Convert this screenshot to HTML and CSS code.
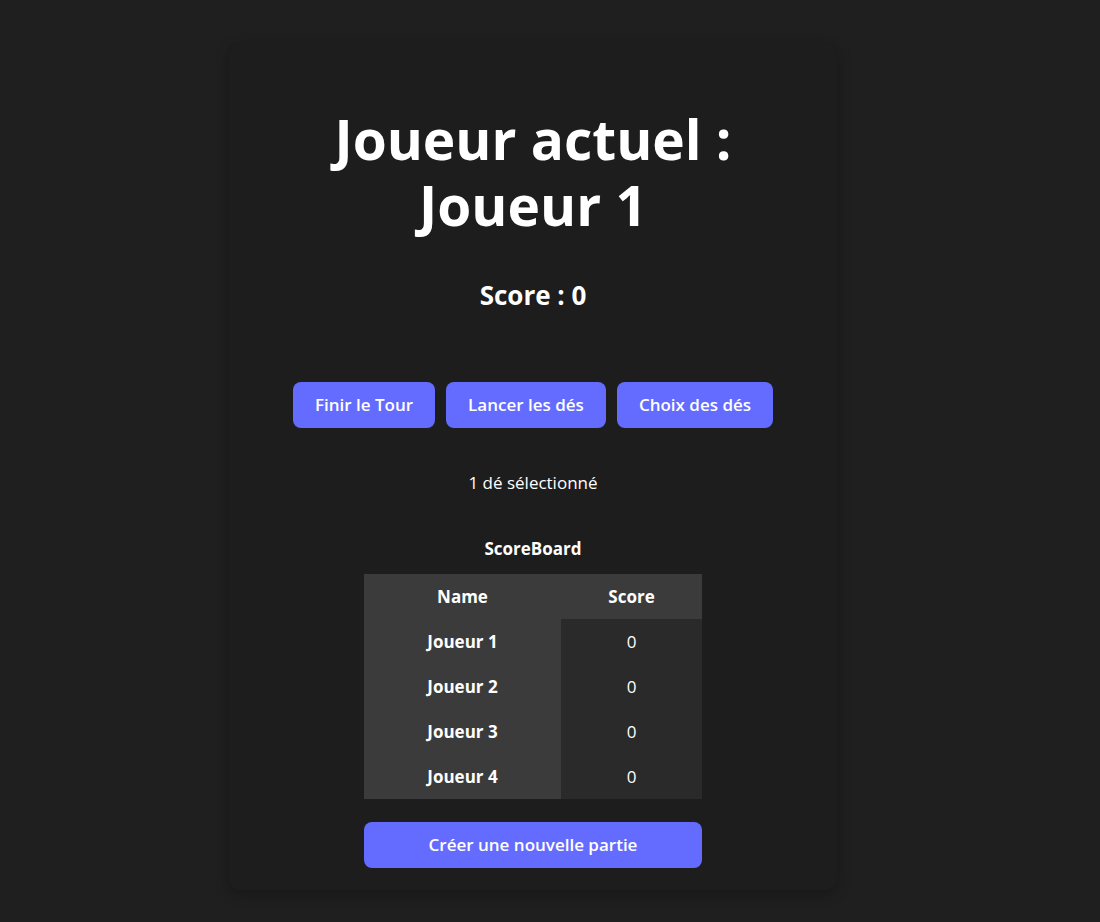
FILE: index.html
```html
<!DOCTYPE html>
<html lang="fr">
<head>
<meta charset="utf-8">
<title>Jeu de dés</title>
<link rel="stylesheet" href="styles.css">
</head>
<body>
<main class="card">
  <h1 class="title"><span class="title-line">Joueur actuel :</span><span class="title-line">Joueur 1</span></h1>
  <h2 class="score">Score : 0</h2>
  <div class="actions">
    <button class="btn">Finir le Tour</button>
    <button class="btn">Lancer les dés</button>
    <button class="btn">Choix des dés</button>
  </div>
  <p class="selected">1 dé sélectionné</p>
  <h3 class="board-title">ScoreBoard</h3>
  <table class="board">
    <thead>
      <tr><th class="col-name">Name</th><th class="col-score">Score</th></tr>
    </thead>
    <tbody>
      <tr><th class="row-name">Joueur 1</th><td class="row-score">0</td></tr>
      <tr><th class="row-name">Joueur 2</th><td class="row-score">0</td></tr>
      <tr><th class="row-name">Joueur 3</th><td class="row-score">0</td></tr>
      <tr><th class="row-name">Joueur 4</th><td class="row-score">0</td></tr>
    </tbody>
  </table>
  <button class="btn btn-wide">Créer une nouvelle partie</button>
</main>
</body>
</html>
```

FILE: styles.css
```css
* { box-sizing: border-box; }

html, body {
  margin: 0;
  background: #1f1f1f;
}

body {
  font-family: "Open Sans", "Noto Sans", sans-serif;
  color: #ffffff;
  display: flex;
  justify-content: center;
  padding: 43px 34px 0 0;
  min-height: 922px;
}

.card {
  width: 608px;
  height: 847px;
  background: #1d1d1d;
  border-radius: 12px;
  box-shadow: 0 4px 14px rgba(0, 0, 0, 0.28);
  display: flex;
  flex-direction: column;
  align-items: center;
  text-align: center;
  padding: 63px 0 22px;
}

.title {
  margin: 0;
  font-size: 55px;
  line-height: 66px;
  font-weight: 700;
  display: flex;
  flex-direction: column;
  align-items: center;
}

.title-line {
  display: block;
  height: 66px;
}

.score {
  margin: 39px 0 0;
  font-size: 26px;
  line-height: 36px;
  font-weight: 700;
}

.actions {
  margin-top: 69px;
  display: flex;
  gap: 11px;
}

.btn {
  font-family: inherit;
  font-size: 17px;
  font-weight: 600;
  line-height: 24px;
  color: #ffffff;
  background: #646cff;
  border: 1px solid transparent;
  border-radius: 8px;
  padding: 10px 21px;
  cursor: pointer;
}

.selected {
  margin: 43px 0 0;
  font-size: 17px;
  line-height: 24px;
}

.board-title {
  margin: 42px 0 0;
  font-size: 17px;
  line-height: 24px;
  font-weight: 700;
}

.board {
  margin-top: 13px;
  width: 338px;
  border-collapse: collapse;
  font-size: 17px;
}

.board th,
.board td {
  height: 45px;
  padding: 0;
  text-align: center;
  vertical-align: middle;
}

.board thead th {
  background: #3b3b3b;
  font-weight: 700;
}

.col-name { width: 197px; }
.col-score { width: 141px; }

.row-name {
  background: #3b3b3b;
  font-weight: 700;
}

.row-score {
  background: #2a2a2a;
  font-weight: 400;
}

.btn-wide {
  margin-top: 23px;
  width: 338px;
}
```
